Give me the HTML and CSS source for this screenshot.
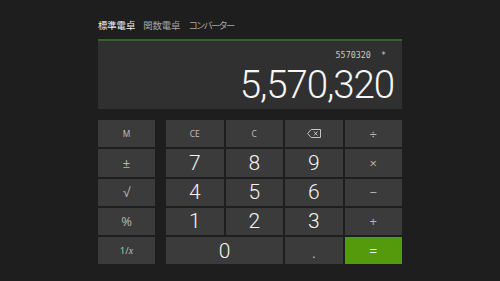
FILE: index.html
```html
<!DOCTYPE html>
<html lang="ja">
<head>
<meta charset="utf-8">
<title>電卓</title>
<link rel="stylesheet" href="styles.css">
</head>
<body>
<div class="calc">
  <nav class="tabs">
    <span class="tab active">標準電卓</span>
    <span class="tab">関数電卓</span>
    <span class="tab kana">コンバーター</span>
  </nav>
  <section class="display">
    <div class="expr">5570320 &nbsp;*</div>
    <div class="result">5,570,320</div>
  </section>
  <section class="keypad">
    <div class="memcol">
      <button class="key small">M</button>
      <button class="key op">±</button>
      <button class="key op">√</button>
      <button class="key op">%</button>
      <button class="key small recip">1/<i>x</i></button>
    </div>
    <div class="main">
      <button class="key small">CE</button>
      <button class="key small">C</button>
      <button class="key op">
        <svg class="bksp" width="14" height="9" viewBox="0 0 14 9"><path d="M4.2 0.5H13.5V8.5H4.2L0.6 4.5Z" fill="none" stroke="#c4c4c4" stroke-width="1"/><path d="M7 2.6L10.4 6.4M10.4 2.6L7 6.4" stroke="#c4c4c4" stroke-width="1"/></svg>
      </button>
      <button class="key op">÷</button>
      <button class="key num">7</button>
      <button class="key num">8</button>
      <button class="key num">9</button>
      <button class="key op">×</button>
      <button class="key num">4</button>
      <button class="key num">5</button>
      <button class="key num">6</button>
      <button class="key op">−</button>
      <button class="key num">1</button>
      <button class="key num">2</button>
      <button class="key num">3</button>
      <button class="key op">+</button>
      <button class="key num zero">0</button>
      <button class="key dot">.</button>
      <button class="key equals">=</button>
    </div>
  </section>
</div>
</body>
</html>
```
FILE: styles.css
```css
html, body {
  margin: 0;
  padding: 0;
  background: #1e1e1e;
  height: 100%;
}
body {
  font-family: "Open Sans", "Noto Sans CJK JP", sans-serif;
  color: #f2f2f2;
}
.calc {
  width: 304px;
  margin: 0 auto;
  padding-top: 19px;
}
.tabs {
  display: flex;
  gap: 8px;
  height: 12px;
  margin-bottom: 8px;
  font-family: "Noto Sans CJK JP", sans-serif;
  font-size: 9.3px;
  line-height: 12px;
}
.tab {
  color: #a8a8a8;
  white-space: nowrap;
}
.tab.active {
  color: #f0f0f0;
}
.tab.kana {
  letter-spacing: -1.8px;
}
.display {
  height: 68px;
  background: #303030;
  border-top: 2px solid #35612a;
  box-sizing: content-box;
  display: flex;
  flex-direction: column;
  align-items: flex-end;
}
.expr {
  margin-top: 8px;
  padding-right: 16px;
  font-family: "DejaVu Sans Mono", monospace;
  font-size: 8.4px;
  line-height: 12px;
  color: #c8c8c8;
  white-space: pre;
}
.result {
  margin-top: 4px;
  padding-right: 8px;
  font-family: Roboto, sans-serif;
  font-weight: 300;
  font-size: 38.5px;
  line-height: 40px;
  letter-spacing: -1.1px;
  color: #f6f6f6;
}
.keypad {
  display: flex;
  gap: 11px;
  margin-top: 11px;
}
.memcol {
  width: 57px;
  display: grid;
  grid-template-rows: repeat(5, 27.25px);
  row-gap: 2px;
}
.main {
  flex: 1;
  display: grid;
  grid-template-columns: repeat(4, 1fr);
  grid-template-rows: repeat(5, 27.25px);
  gap: 2px;
}
.key {
  margin: 0;
  padding: 0;
  border: none;
  background: #3b3b3b;
  color: #f2f2f2;
  font-family: "Open Sans", sans-serif;
  display: flex;
  align-items: center;
  justify-content: center;
}
.key.small {
  font-size: 8.4px;
  color: #c2c2c2;
}
.key.recip {
  font-size: 9.5px;
}
.key.small i {
  font-family: "Liberation Serif", serif;
  font-size: 10px;
}
.key.op {
  font-size: 13px;
  color: #b8b8b8;
}
.key.num {
  font-family: Roboto, sans-serif;
  font-size: 21px;
  font-weight: 300;
  color: #f4f4f4;
}
.key.zero {
  grid-column: span 2;
}
.key.dot {
  font-size: 12px;
  color: #c8c8c8;
  align-items: flex-end;
  padding-bottom: 2px;
}
.key.equals {
  background: #549a0c;
  color: #eef5e4;
  font-size: 14px;
}
.bksp {
  display: block;
}
```
